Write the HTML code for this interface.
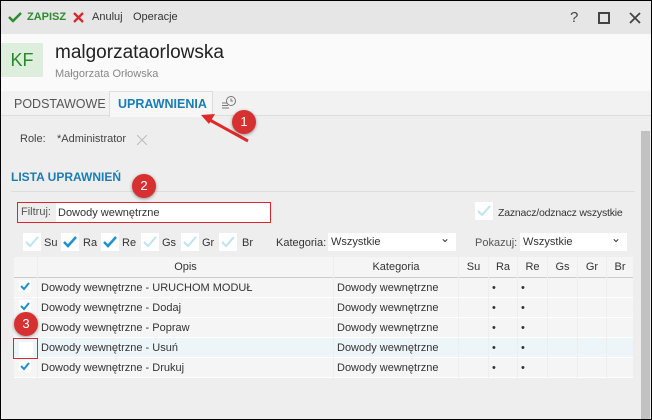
<!DOCTYPE html>
<html><head><meta charset="utf-8"><style>
*{box-sizing:border-box;margin:0;padding:0}
body{width:652px;height:420px;overflow:hidden;font-family:"Liberation Sans",sans-serif;font-size:11px;color:#333;background:#000;position:relative}
.a{position:absolute}
.win{position:absolute;left:1px;top:1px;width:650px;height:418px;background:#eee;overflow:hidden}
.cb{position:absolute;width:18px;height:18px;background:#fff}
.sel{position:absolute;background:#fff;height:18px;line-height:18px;padding-left:3px;font-size:11px}
.sel:after{content:"⌄";position:absolute;right:6px;top:-4px;font-size:12px}
table{border-collapse:separate;border-spacing:1px 0;table-layout:fixed}
td{background:#f5f5f5;height:20px;border-bottom:1px solid #fff;padding:0 3px;font-size:11px;white-space:nowrap;overflow:hidden}
.badge{position:absolute;width:24px;height:24px;border-radius:50%;background:#d63031;color:#fff;font-size:13px;text-align:center;line-height:24px;box-shadow:0 1px 3px rgba(0,0,0,.4)}
</style></head><body><div class="win">
<div class="a" style="left:0;top:0;width:650px;height:33px;background:#e6e6e6"></div>
<svg class="a" style="left:7px;top:11px" width="14" height="11"><path d="M1 5 L5 9 L13 1" stroke="#2e8b2e" stroke-width="2.5" fill="none"/></svg>
<div class="a" style="left:26px;top:10px;color:#2e8b2e;font-weight:bold">ZAPISZ</div>
<svg class="a" style="left:72px;top:11px" width="11" height="11"><path d="M1 1L10 10M10 1L1 10" stroke="#d9272e" stroke-width="2.3"/></svg>
<div class="a" style="left:91px;top:10px">Anuluj</div>
<div class="a" style="left:132px;top:10px">Operacje</div>
<div class="a" style="left:569px;top:8px;font-size:15px;color:#444">?</div>
<div class="a" style="left:597px;top:11px;width:12px;height:12px;border:2px solid #444"></div>
<svg class="a" style="left:628px;top:11px" width="12" height="12"><path d="M1 1L11 11M11 1L1 11" stroke="#444" stroke-width="1.8"/></svg>
<div class="a" style="left:0;top:33px;width:650px;height:57px;background:#fafafa"></div>
<div class="a" style="left:0;top:42px;width:42px;height:34px;background:#deeedc;color:#2a8a2a;font-size:18px;line-height:34px;text-align:center">KF</div>
<div class="a" style="left:54px;top:41px;font-size:19px;color:#222">malgorzataorlowska</div>
<div class="a" style="left:54px;top:67px;font-size:11px;color:#888">Małgorzata Orłowska</div>
<div class="a" style="left:0;top:90px;width:650px;height:25px;background:#f2f2f2;border-bottom:1px solid #ddd"></div>
<div class="a" style="left:13px;top:96px;font-size:12.5px;color:#555">PODSTAWOWE</div>
<div class="a" style="left:108px;top:90px;width:104px;height:26px;background:#f7f7f7;border:1px solid #ddd;border-bottom:none"></div>
<div class="a" style="left:117px;top:96px;font-size:12.5px;font-weight:bold;color:#1a7db5">UPRAWNIENIA</div>
<svg class="a" style="left:220px;top:94px" width="16" height="16"><circle cx="10" cy="6" r="4.5" stroke="#777" fill="none"/><path d="M10 3.5V6H12M1 8H6M1 10.5H7M1 13H8" stroke="#777" fill="none"/></svg>
<div class="a" style="left:0;top:116px;width:650px;height:302px;background:#eee"></div>
<div class="a" style="left:640px;top:130px;width:9px;height:288px;background:#c2c2c2"></div>
<div class="a" style="left:19px;top:132px;color:#444">Role:</div>
<div class="a" style="left:56px;top:132px;color:#444">*Administrator</div>
<svg class="a" style="left:136px;top:134px" width="10" height="10"><path d="M0 0L10 10M10 0L0 10" stroke="#bbb"/></svg>
<div class="a" style="left:10px;top:169px;font-size:12px;font-weight:bold;color:#1a7db5">LISTA UPRAWNIEŃ</div>
<div class="a" style="left:10px;top:190px;width:624px;height:1px;background:#ddd"></div>
<div class="a" style="left:16px;top:201px;width:254px;height:21px;border:1px solid #d9272e;background:#fff"></div>
<div class="a" style="left:17px;top:202px;width:38px;height:19px;background:#eee;color:#555;line-height:19px;padding-left:3px">Filtruj:</div>
<div class="a" style="left:57px;top:206px">Dowody wewnętrzne</div>
<div class="cb" style="left:474px;top:201px"><svg width="18" height="18"><path d="M3 9L7 13L15 4" stroke="#bfe3f3" stroke-width="2" fill="none"/></svg></div>
<div class="a" style="left:497px;top:206px;font-size:10.5px;letter-spacing:-0.2px">Zaznacz/odznacz wszystkie</div>
<div class="cb" style="left:22px;top:232px"><svg width="18" height="18"><path d="M3 9L7 13L15 4" stroke="#bfe3f3" stroke-width="2" fill="none"/></svg></div><div class="a" style="left:43px;top:236px">Su</div>
<div class="cb" style="left:60px;top:232px"><svg width="18" height="18"><path d="M3 9L7 13L15 4" stroke="#1e8fd0" stroke-width="2.5" fill="none"/></svg></div><div class="a" style="left:82px;top:236px">Ra</div>
<div class="cb" style="left:100px;top:232px"><svg width="18" height="18"><path d="M3 9L7 13L15 4" stroke="#1e8fd0" stroke-width="2.5" fill="none"/></svg></div><div class="a" style="left:121px;top:236px">Re</div>
<div class="cb" style="left:140px;top:232px"><svg width="18" height="18"><path d="M3 9L7 13L15 4" stroke="#bfe3f3" stroke-width="2" fill="none"/></svg></div><div class="a" style="left:161px;top:236px">Gs</div>
<div class="cb" style="left:180px;top:232px"><svg width="18" height="18"><path d="M3 9L7 13L15 4" stroke="#bfe3f3" stroke-width="2" fill="none"/></svg></div><div class="a" style="left:201px;top:236px">Gr</div>
<div class="cb" style="left:218px;top:232px"><svg width="18" height="18"><path d="M3 9L7 13L15 4" stroke="#bfe3f3" stroke-width="2" fill="none"/></svg></div><div class="a" style="left:241px;top:236px">Br</div>
<div class="a" style="left:275px;top:236px">Kategoria:</div>
<div class="sel" style="left:327px;top:232px;width:128px">Wszystkie</div>
<div class="a" style="left:474px;top:236px;color:#555">Pokazuj:</div>
<div class="sel" style="left:519px;top:232px;width:107px">Wszystkie</div>
<table class="a" style="left:12px;top:256px;width:621px">
<colgroup><col style="width:23px"><col style="width:295px"><col style="width:124px"><col style="width:29px"><col style="width:28px"><col style="width:29px"><col style="width:29px"><col style="width:28px"><col style="width:26px"></colgroup>
<tr style="text-align:center"><td style="height:21px;border-bottom:1px solid #ccc"></td><td style="border-bottom:1px solid #ccc">Opis</td><td style="border-bottom:1px solid #ccc">Kategoria</td><td style="border-bottom:1px solid #ccc">Su</td><td style="border-bottom:1px solid #ccc">Ra</td><td style="border-bottom:1px solid #ccc">Re</td><td style="border-bottom:1px solid #ccc">Gs</td><td style="border-bottom:1px solid #ccc">Gr</td><td style="border-bottom:1px solid #ccc">Br</td></tr>
<tr><td><svg width="16" height="14"><rect x="2" y="1" width="12" height="12" fill="#fff"/><path d="M4 7L7 10L12 4" stroke="#1e8fd0" stroke-width="2" fill="none"/></svg></td><td>Dowody wewnętrzne - URUCHOM MODUŁ</td><td>Dowody wewnętrzne</td><td></td><td>•</td><td>•</td><td></td><td></td><td></td></tr>
<tr><td><svg width="16" height="14"><rect x="2" y="1" width="12" height="12" fill="#fff"/><path d="M4 7L7 10L12 4" stroke="#1e8fd0" stroke-width="2" fill="none"/></svg></td><td>Dowody wewnętrzne - Dodaj</td><td>Dowody wewnętrzne</td><td></td><td>•</td><td>•</td><td></td><td></td><td></td></tr>
<tr><td></td><td>Dowody wewnętrzne - Popraw</td><td>Dowody wewnętrzne</td><td></td><td>•</td><td>•</td><td></td><td></td><td></td></tr>
<tr><td style="background:#eef5f8"></td><td style="background:#eef5f8">Dowody wewnętrzne - Usuń</td><td style="background:#eef5f8">Dowody wewnętrzne</td><td style="background:#eef5f8"></td><td style="background:#eef5f8">•</td><td style="background:#eef5f8">•</td><td style="background:#eef5f8"></td><td style="background:#eef5f8"></td><td style="background:#eef5f8"></td></tr>
<tr><td><svg width="16" height="14"><rect x="2" y="1" width="12" height="12" fill="#fff"/><path d="M4 7L7 10L12 4" stroke="#1e8fd0" stroke-width="2" fill="none"/></svg></td><td>Dowody wewnętrzne - Drukuj</td><td>Dowody wewnętrzne</td><td></td><td>•</td><td>•</td><td></td><td></td><td></td></tr>
</table>
<div class="a" style="left:12px;top:337px;width:25px;height:21px;border:1.5px solid #d9272e;background:transparent"></div>
<div class="a" style="left:18px;top:341px;width:14px;height:14px;background:#fff"></div>
<svg class="a" style="left:0;top:0" width="650" height="200"><path d="M247 140L207 118" stroke="#e02a2a" stroke-width="3"/><path d="M200 114L214 113L208 123Z" fill="#e02a2a"/></svg>
<div class="badge" style="left:231px;top:109px">1</div>
<div class="badge" style="left:131px;top:173px">2</div>
<div class="badge" style="left:13px;top:311px">3</div>
</div></body></html>
